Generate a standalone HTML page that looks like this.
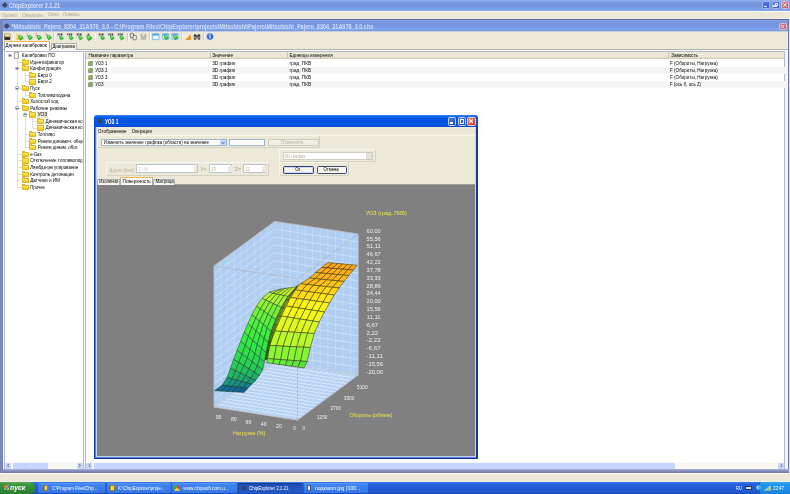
<!DOCTYPE html>
<html><head><meta charset="utf-8">
<style>
*{margin:0;padding:0;box-sizing:border-box}
html,body{width:790px;height:494px;overflow:hidden;background:#ece9d8;font-family:"Liberation Sans",sans-serif;}
.a{position:absolute}
.t{position:absolute;white-space:nowrap;line-height:1;color:#000}
#stage{position:absolute;left:0;top:0;width:790px;height:494px;overflow:hidden;filter:blur(0.4px)}
</style></head><body>
<div id="stage">
<!-- main window title -->
<div class="a" style="left:0;top:0;width:790px;height:10.6px;background:linear-gradient(#97b3ef 0%,#7b9ae3 22%,#7594e0 50%,#7b9fe8 80%,#84a8ee 94%,#7c98da 100%)"></div><div class="a" style="left:0;top:10.6px;width:790px;height:1px;background:#f8f8f4"></div>
<div class="a" style="left:0;top:19px;width:2.7px;height:453.6px;background:#7a86b8"></div>
<div class="a" style="left:789px;top:19px;width:1px;height:453.6px;background:#d4dcff"></div>
<div class="a" style="left:2.5px;top:3.4px;width:3.7px;height:3.7px;border-radius:0.8px;background:#3f4862;transform:rotate(45deg);box-shadow:0 0 0.6px #56607c"></div>
<!-- main buttons -->
<div class="a" style="left:762px;top:1.4px;width:8px;height:7.8px;border-radius:1.5px;background:linear-gradient(135deg,#5a80e4,#4168d6 60%,#3a5fcc);border:0.4px solid #9cb2ee"></div>
<div class="a" style="left:764px;top:6.2px;width:3px;height:1.1px;background:#f4f6ff"></div>
<div class="a" style="left:771.6px;top:1.4px;width:8px;height:7.8px;border-radius:1.5px;background:linear-gradient(135deg,#5a80e4,#4168d6 60%,#3a5fcc);border:0.4px solid #9cb2ee"></div>
<div class="a" style="left:774.8px;top:3px;width:3.2px;height:2.8px;border:0.45px solid #e8eeff;border-top-width:0.8px"></div>
<div class="a" style="left:773.4px;top:4.5px;width:3.2px;height:2.8px;border:0.45px solid #e8eeff;border-top-width:0.8px;background:#4168d6"></div>
<div class="a" style="left:781.2px;top:1.4px;width:8px;height:7.8px;border-radius:1.5px;background:linear-gradient(135deg,#d48a94,#c4707a 60%,#b8626e);border:0.4px solid #dcb8cc"></div>
<svg class="a" style="left:781.2px;top:1.4px" width="8" height="7.8"><path d="M2.3 2.2 L5.7 5.6 M5.7 2.2 L2.3 5.6" stroke="#fbf3f5" stroke-width="0.85"/></svg>
<!-- menu bar -->
<div class="a" style="left:0;top:11.5px;width:790px;height:7.5px;background:#ece9d8"></div>
<!-- MDI child -->
<div class="a" style="left:2.7px;top:19.3px;width:786.3px;height:453.2px;background:#c6ccdc"></div>
<div class="a" style="left:2.7px;top:18.9px;width:786.3px;height:1px;background:#667090"></div>
<div class="a" style="left:787.7px;top:19.3px;width:1.3px;height:453.2px;background:#7078a8"></div>
<div class="a" style="left:2.7px;top:19.9px;width:785px;height:11.6px;background:linear-gradient(#7f9de6 0%,#7695e1 30%,#7696e2 55%,#7fa6ee 86%,#7fa4ec 93%,#6c8ad2 100%)"></div>
<div class="a" style="left:4.7px;top:24px;width:3.6px;height:3.6px;border-radius:0.8px;background:#3f4862;transform:rotate(45deg);box-shadow:0 0 0.6px #56607c"></div>
<div class="a" style="left:779px;top:23px;width:7.5px;height:7.2px;border-radius:1.3px;background:linear-gradient(135deg,#d48a94,#c4707a 60%,#b8626e);border:0.4px solid #dcb8cc"></div>
<svg class="a" style="left:779px;top:23px" width="7.5" height="7"><path d="M2.1 2 L5.4 5.3 M5.4 2 L2.1 5.3" stroke="#fbf3f5" stroke-width="0.8"/></svg>
<!-- child client -->
<div class="a" style="left:2.7px;top:31.5px;width:785px;height:438px;background:#ece9d8"></div>
<!-- toolbar icons -->
<div id="tb">
<div class="a" style="left:12.7px;top:33px;width:0.5px;height:8px;background:#cfccbd;"></div><div class="a" style="left:13.2px;top:33px;width:0.5px;height:8px;background:#fbfaf5;"></div><div class="a" style="left:53.2px;top:33px;width:0.5px;height:8px;background:#cfccbd;"></div><div class="a" style="left:53.7px;top:33px;width:0.5px;height:8px;background:#fbfaf5;"></div><div class="a" style="left:94.7px;top:33px;width:0.5px;height:8px;background:#cfccbd;"></div><div class="a" style="left:95.2px;top:33px;width:0.5px;height:8px;background:#fbfaf5;"></div><div class="a" style="left:127.2px;top:33px;width:0.5px;height:8px;background:#cfccbd;"></div><div class="a" style="left:127.7px;top:33px;width:0.5px;height:8px;background:#fbfaf5;"></div><div class="a" style="left:149.2px;top:33px;width:0.5px;height:8px;background:#cfccbd;"></div><div class="a" style="left:149.7px;top:33px;width:0.5px;height:8px;background:#fbfaf5;"></div><div class="a" style="left:181.2px;top:33px;width:0.5px;height:8px;background:#cfccbd;"></div><div class="a" style="left:181.7px;top:33px;width:0.5px;height:8px;background:#fbfaf5;"></div><div class="a" style="left:203.2px;top:33px;width:0.5px;height:8px;background:#cfccbd;"></div><div class="a" style="left:203.7px;top:33px;width:0.5px;height:8px;background:#fbfaf5;"></div>
</div>
<!-- tabs -->
<div class="a" style="left:2.7px;top:49.2px;width:785px;height:420.3px;background:#f4f6fb;border-top:0.5px solid #b4b6b4"></div>
<div class="a" style="left:3.5px;top:41px;width:46.5px;height:9.5px;background:#fcfcfa;border:0.5px solid #a9b0ae;border-bottom:none;border-radius:1.5px 1.5px 0 0"></div>
<div class="a" style="left:3.8px;top:41px;width:46px;height:1.1px;background:#f5b552;border-radius:1.5px 1.5px 0 0"></div>
<div class="a" style="left:50.5px;top:42.5px;width:26.5px;height:7.2px;background:#f6f5ee;border:0.5px solid #a9b0ae;border-bottom:none;border-radius:1.5px 1.5px 0 0"></div>
<!-- tree pane -->
<div class="a" style="left:4.1px;top:50.9px;width:79.7px;height:418.4px;background:#fff;border:0.7px solid #b4bccc"></div>
<div id="tree">
<div class="a" style="left:9.45px;top:57.4px;width:0.5px;height:0px;background:#dedede;"></div><div class="a" style="left:16.75px;top:58.4px;width:0.5px;height:128.6px;background:#dedede;"></div><div class="a" style="left:17px;top:61.73px;width:4.6px;height:0.5px;background:#dedede;"></div><div class="a" style="left:17px;top:68.31px;width:4.6px;height:0.5px;background:#dedede;"></div><div class="a" style="left:25px;top:74.89px;width:4.2px;height:0.5px;background:#dedede;"></div><div class="a" style="left:25px;top:81.47px;width:4.2px;height:0.5px;background:#dedede;"></div><div class="a" style="left:17px;top:88.05px;width:4.6px;height:0.5px;background:#dedede;"></div><div class="a" style="left:25px;top:94.63px;width:4.2px;height:0.5px;background:#dedede;"></div><div class="a" style="left:17px;top:101.21px;width:4.6px;height:0.5px;background:#dedede;"></div><div class="a" style="left:17px;top:107.79px;width:4.6px;height:0.5px;background:#dedede;"></div><div class="a" style="left:25px;top:114.37px;width:4.2px;height:0.5px;background:#dedede;"></div><div class="a" style="left:32.6px;top:120.95px;width:4.4px;height:0.5px;background:#dedede;"></div><div class="a" style="left:32.6px;top:127.53px;width:4.4px;height:0.5px;background:#dedede;"></div><div class="a" style="left:25px;top:134.11px;width:4.2px;height:0.5px;background:#dedede;"></div><div class="a" style="left:25px;top:140.69px;width:4.2px;height:0.5px;background:#dedede;"></div><div class="a" style="left:25px;top:147.27px;width:4.2px;height:0.5px;background:#dedede;"></div><div class="a" style="left:17px;top:153.85px;width:4.6px;height:0.5px;background:#dedede;"></div><div class="a" style="left:17px;top:160.43px;width:4.6px;height:0.5px;background:#dedede;"></div><div class="a" style="left:17px;top:167.01px;width:4.6px;height:0.5px;background:#dedede;"></div><div class="a" style="left:17px;top:173.59px;width:4.6px;height:0.5px;background:#dedede;"></div><div class="a" style="left:17px;top:180.17px;width:4.6px;height:0.5px;background:#dedede;"></div><div class="a" style="left:17px;top:186.75px;width:4.6px;height:0.5px;background:#dedede;"></div><div class="a" style="left:24.75px;top:71.56px;width:0.5px;height:10.16px;background:#dedede;"></div><div class="a" style="left:24.75px;top:91.3px;width:0.5px;height:3.58px;background:#dedede;"></div><div class="a" style="left:24.75px;top:111.04px;width:0.5px;height:36.48px;background:#dedede;"></div><div class="a" style="left:32.35px;top:117.62px;width:0.5px;height:10.16px;background:#dedede;"></div><div class="a" style="left:7.8px;top:53.5px;width:3.8px;height:3.8px;background:#eef1f6;border:0.5px solid #a9b5c8;border-radius:1px"></div><div class="a" style="left:8.7px;top:55.1px;width:2px;height:0.6px;background:#6a6f7a;"></div><div class="a" style="left:13.6px;top:52px;width:5.2px;height:6.8px;background:#f1f1ee;border:0.5px solid #a5a5a0;border-radius:0.8px"></div><div class="a" style="left:21.5px;top:59.68px;width:7px;height:5.2px;background:linear-gradient(#fdee6e,#f6d322 70%,#eec51c);border:0.45px solid #dcb62a;border-radius:0.8px"></div><div class="a" style="left:21.5px;top:58.78px;width:3.3px;height:1.5px;background:#f7dc45;border:0.45px solid #dcb62a;border-bottom:none;border-radius:0.8px 0.8px 0 0"></div><div class="a" style="left:15.1px;top:66.66px;width:3.8px;height:3.8px;background:#eef1f6;border:0.5px solid #a9b5c8;border-radius:1px"></div><div class="a" style="left:16px;top:68.26px;width:2px;height:0.6px;background:#6a6f7a;"></div><div class="a" style="left:21.5px;top:66.26px;width:7px;height:5.2px;background:linear-gradient(#fdee6e,#f6d322 70%,#eec51c);border:0.45px solid #dcb62a;border-radius:0.8px"></div><div class="a" style="left:21.5px;top:65.36px;width:3.3px;height:1.5px;background:#f7dc45;border:0.45px solid #dcb62a;border-bottom:none;border-radius:0.8px 0.8px 0 0"></div><div class="a" style="left:29.1px;top:72.84px;width:7px;height:5.2px;background:linear-gradient(#fdee6e,#f6d322 70%,#eec51c);border:0.45px solid #dcb62a;border-radius:0.8px"></div><div class="a" style="left:29.1px;top:71.94px;width:3.3px;height:1.5px;background:#f7dc45;border:0.45px solid #dcb62a;border-bottom:none;border-radius:0.8px 0.8px 0 0"></div><div class="a" style="left:29.1px;top:79.42px;width:7px;height:5.2px;background:linear-gradient(#fdee6e,#f6d322 70%,#eec51c);border:0.45px solid #dcb62a;border-radius:0.8px"></div><div class="a" style="left:29.1px;top:78.52px;width:3.3px;height:1.5px;background:#f7dc45;border:0.45px solid #dcb62a;border-bottom:none;border-radius:0.8px 0.8px 0 0"></div><div class="a" style="left:15.1px;top:86.4px;width:3.8px;height:3.8px;background:#eef1f6;border:0.5px solid #a9b5c8;border-radius:1px"></div><div class="a" style="left:16px;top:88px;width:2px;height:0.6px;background:#6a6f7a;"></div><div class="a" style="left:21.5px;top:86px;width:7px;height:5.2px;background:linear-gradient(#fdee6e,#f6d322 70%,#eec51c);border:0.45px solid #dcb62a;border-radius:0.8px"></div><div class="a" style="left:21.5px;top:85.1px;width:3.3px;height:1.5px;background:#f7dc45;border:0.45px solid #dcb62a;border-bottom:none;border-radius:0.8px 0.8px 0 0"></div><div class="a" style="left:29.1px;top:92.58px;width:7px;height:5.2px;background:linear-gradient(#fdee6e,#f6d322 70%,#eec51c);border:0.45px solid #dcb62a;border-radius:0.8px"></div><div class="a" style="left:29.1px;top:91.68px;width:3.3px;height:1.5px;background:#f7dc45;border:0.45px solid #dcb62a;border-bottom:none;border-radius:0.8px 0.8px 0 0"></div><div class="a" style="left:21.5px;top:99.16px;width:7px;height:5.2px;background:linear-gradient(#fdee6e,#f6d322 70%,#eec51c);border:0.45px solid #dcb62a;border-radius:0.8px"></div><div class="a" style="left:21.5px;top:98.26px;width:3.3px;height:1.5px;background:#f7dc45;border:0.45px solid #dcb62a;border-bottom:none;border-radius:0.8px 0.8px 0 0"></div><div class="a" style="left:15.1px;top:106.14px;width:3.8px;height:3.8px;background:#eef1f6;border:0.5px solid #a9b5c8;border-radius:1px"></div><div class="a" style="left:16px;top:107.74px;width:2px;height:0.6px;background:#6a6f7a;"></div><div class="a" style="left:21.5px;top:105.74px;width:7px;height:5.2px;background:linear-gradient(#fdee6e,#f6d322 70%,#eec51c);border:0.45px solid #dcb62a;border-radius:0.8px"></div><div class="a" style="left:21.5px;top:104.84px;width:3.3px;height:1.5px;background:#f7dc45;border:0.45px solid #dcb62a;border-bottom:none;border-radius:0.8px 0.8px 0 0"></div><div class="a" style="left:23.1px;top:112.72px;width:3.8px;height:3.8px;background:#eef1f6;border:0.5px solid #a9b5c8;border-radius:1px"></div><div class="a" style="left:24px;top:114.32px;width:2px;height:0.6px;background:#6a6f7a;"></div><div class="a" style="left:36.8px;top:111.62px;width:11px;height:6px;background:#ece9d8;"></div><div class="a" style="left:29.1px;top:112.32px;width:7px;height:5.2px;background:linear-gradient(#fdee6e,#f6d322 70%,#eec51c);border:0.45px solid #dcb62a;border-radius:0.8px"></div><div class="a" style="left:29.1px;top:111.42px;width:3.3px;height:1.5px;background:#f7dc45;border:0.45px solid #dcb62a;border-bottom:none;border-radius:0.8px 0.8px 0 0"></div><div class="a" style="left:36.9px;top:118.9px;width:7px;height:5.2px;background:linear-gradient(#fdee6e,#f6d322 70%,#eec51c);border:0.45px solid #dcb62a;border-radius:0.8px"></div><div class="a" style="left:36.9px;top:118px;width:3.3px;height:1.5px;background:#f7dc45;border:0.45px solid #dcb62a;border-bottom:none;border-radius:0.8px 0.8px 0 0"></div><div class="a" style="left:36.9px;top:125.48px;width:7px;height:5.2px;background:linear-gradient(#fdee6e,#f6d322 70%,#eec51c);border:0.45px solid #dcb62a;border-radius:0.8px"></div><div class="a" style="left:36.9px;top:124.58px;width:3.3px;height:1.5px;background:#f7dc45;border:0.45px solid #dcb62a;border-bottom:none;border-radius:0.8px 0.8px 0 0"></div><div class="a" style="left:29.1px;top:132.06px;width:7px;height:5.2px;background:linear-gradient(#fdee6e,#f6d322 70%,#eec51c);border:0.45px solid #dcb62a;border-radius:0.8px"></div><div class="a" style="left:29.1px;top:131.16px;width:3.3px;height:1.5px;background:#f7dc45;border:0.45px solid #dcb62a;border-bottom:none;border-radius:0.8px 0.8px 0 0"></div><div class="a" style="left:29.1px;top:138.64px;width:7px;height:5.2px;background:linear-gradient(#fdee6e,#f6d322 70%,#eec51c);border:0.45px solid #dcb62a;border-radius:0.8px"></div><div class="a" style="left:29.1px;top:137.74px;width:3.3px;height:1.5px;background:#f7dc45;border:0.45px solid #dcb62a;border-bottom:none;border-radius:0.8px 0.8px 0 0"></div><div class="a" style="left:29.1px;top:145.22px;width:7px;height:5.2px;background:linear-gradient(#fdee6e,#f6d322 70%,#eec51c);border:0.45px solid #dcb62a;border-radius:0.8px"></div><div class="a" style="left:29.1px;top:144.32px;width:3.3px;height:1.5px;background:#f7dc45;border:0.45px solid #dcb62a;border-bottom:none;border-radius:0.8px 0.8px 0 0"></div><div class="a" style="left:21.5px;top:151.8px;width:7px;height:5.2px;background:linear-gradient(#fdee6e,#f6d322 70%,#eec51c);border:0.45px solid #dcb62a;border-radius:0.8px"></div><div class="a" style="left:21.5px;top:150.9px;width:3.3px;height:1.5px;background:#f7dc45;border:0.45px solid #dcb62a;border-bottom:none;border-radius:0.8px 0.8px 0 0"></div><div class="a" style="left:21.5px;top:158.38px;width:7px;height:5.2px;background:linear-gradient(#fdee6e,#f6d322 70%,#eec51c);border:0.45px solid #dcb62a;border-radius:0.8px"></div><div class="a" style="left:21.5px;top:157.48px;width:3.3px;height:1.5px;background:#f7dc45;border:0.45px solid #dcb62a;border-bottom:none;border-radius:0.8px 0.8px 0 0"></div><div class="a" style="left:21.5px;top:164.96px;width:7px;height:5.2px;background:linear-gradient(#fdee6e,#f6d322 70%,#eec51c);border:0.45px solid #dcb62a;border-radius:0.8px"></div><div class="a" style="left:21.5px;top:164.06px;width:3.3px;height:1.5px;background:#f7dc45;border:0.45px solid #dcb62a;border-bottom:none;border-radius:0.8px 0.8px 0 0"></div><div class="a" style="left:21.5px;top:171.54px;width:7px;height:5.2px;background:linear-gradient(#fdee6e,#f6d322 70%,#eec51c);border:0.45px solid #dcb62a;border-radius:0.8px"></div><div class="a" style="left:21.5px;top:170.64px;width:3.3px;height:1.5px;background:#f7dc45;border:0.45px solid #dcb62a;border-bottom:none;border-radius:0.8px 0.8px 0 0"></div><div class="a" style="left:21.5px;top:178.12px;width:7px;height:5.2px;background:linear-gradient(#fdee6e,#f6d322 70%,#eec51c);border:0.45px solid #dcb62a;border-radius:0.8px"></div><div class="a" style="left:21.5px;top:177.22px;width:3.3px;height:1.5px;background:#f7dc45;border:0.45px solid #dcb62a;border-bottom:none;border-radius:0.8px 0.8px 0 0"></div><div class="a" style="left:21.5px;top:184.7px;width:7px;height:5.2px;background:linear-gradient(#fdee6e,#f6d322 70%,#eec51c);border:0.45px solid #dcb62a;border-radius:0.8px"></div><div class="a" style="left:21.5px;top:183.8px;width:3.3px;height:1.5px;background:#f7dc45;border:0.45px solid #dcb62a;border-bottom:none;border-radius:0.8px 0.8px 0 0"></div>
</div>
<!-- tree hscroll -->
<div class="a" style="left:4.8px;top:462.2px;width:78.3px;height:6.6px;background:#f8f8f3"></div>
<div class="a" style="left:5.2px;top:462.5px;width:6px;height:6px;background:#c9d7fa;border-radius:1px"></div>
<div class="a" style="left:76.6px;top:462.5px;width:6px;height:6px;background:#c9d7fa;border-radius:1px"></div>
<div class="a" style="left:12.6px;top:462.5px;width:35.4px;height:6px;background:#c6d5fb;border-radius:1px"></div>
<!-- right pane -->
<div class="a" style="left:85px;top:50.9px;width:700.2px;height:418.4px;background:#fff;border:0.7px solid #b4bccc"></div>
<div class="a" style="left:85.7px;top:51.6px;width:698.8px;height:7.6px;background:#ebe8d7;border-bottom:0.7px solid #d0cdbe;box-shadow:inset 0 -1px 0.5px #e2dfcf"></div>
<div class="a" style="left:209.5px;top:52px;width:0.5px;height:6px;background:#c9c5b4"></div>
<div class="a" style="left:286.5px;top:52px;width:0.5px;height:6px;background:#c9c5b4"></div>
<div class="a" style="left:667.5px;top:52px;width:0.5px;height:6px;background:#c9c5b4"></div>
<div class="a" style="left:88.3px;top:61.2px;width:4.6px;height:4.4px;background:linear-gradient(135deg,#c8a050 0 30%,#6c9a50 30% 65%,#8a8a8a 65%);border-radius:1px;opacity:.85"></div><div class="a" style="left:86.6px;top:67px;width:698.3px;height:7px;background:#f6f6f6;"></div><div class="a" style="left:88.3px;top:68.2px;width:4.6px;height:4.4px;background:linear-gradient(135deg,#c8a050 0 30%,#6c9a50 30% 65%,#8a8a8a 65%);border-radius:1px;opacity:.85"></div><div class="a" style="left:88.3px;top:75.2px;width:4.6px;height:4.4px;background:linear-gradient(135deg,#c8a050 0 30%,#6c9a50 30% 65%,#8a8a8a 65%);border-radius:1px;opacity:.85"></div><div class="a" style="left:86.6px;top:81px;width:698.3px;height:7px;background:#f6f6f6;"></div><div class="a" style="left:88.3px;top:82.2px;width:4.6px;height:4.4px;background:linear-gradient(135deg,#c8a050 0 30%,#6c9a50 30% 65%,#8a8a8a 65%);border-radius:1px;opacity:.85"></div>
<!-- right hscroll -->
<div class="a" style="left:85.7px;top:462.2px;width:698.8px;height:6.6px;background:#f8f8f3"></div>
<div class="a" style="left:86.2px;top:462.5px;width:6px;height:6px;background:#c9d7fa;border-radius:1px"></div>
<div class="a" style="left:778px;top:462.5px;width:6px;height:6px;background:#c9d7fa;border-radius:1px"></div>
<div class="a" style="left:93.5px;top:462.5px;width:581.5px;height:6px;background:#c6d5fb;border-radius:1px"></div>
<svg class="a" style="left:0;top:460px" width="790" height="10"><g fill="none" stroke="#4d6185" stroke-width="0.9"><path d="M9 4 L7.4 5.5 L9 7"/><path d="M78.9 4 L80.5 5.5 L78.9 7"/><path d="M90.4 4 L88.8 5.5 L90.4 7"/><path d="M780.6 4 L782.2 5.5 L780.6 7"/></g><g stroke="#e4ecff" stroke-width="0.4"><path d="M29 4.3 V6.7 M30 4.3 V6.7 M31 4.3 V6.7"/></g></svg>
<!-- status -->
<div class="a" style="left:2.7px;top:469.4px;width:786.3px;height:3.2px;background:linear-gradient(#aab0d4,#8088b8 60%,#6c74a4)"></div><div class="a" style="left:0px;top:472.6px;width:790px;height:9.4px;background:#ece9d8;border-top:0.9px solid #fdfdfa"></div>
<!-- dialog -->
<div class="a" style="left:93.9px;top:114.8px;width:384.1px;height:344.4px;background:#173a9e;border-radius:3.5px 3.5px 0 0"></div><div class="a" style="left:95.4px;top:126px;width:381.1px;height:331.8px;background:#5b7cd0"></div><div class="a" style="left:96.1px;top:126px;width:379.7px;height:331.1px;background:#c6d2ee"></div>
<div class="a" style="left:93.8px;top:114.8px;width:384px;height:12.5px;border-radius:3.5px 3.5px 0 0;background:linear-gradient(#3a86f4 0%,#0a5be6 18%,#0353e0 50%,#0456e4 80%,#0a47c8 100%)"></div>
<div class="a" style="left:97.9px;top:119.2px;width:3.6px;height:3.6px;border-radius:0.8px;background:#39415c;transform:rotate(45deg);box-shadow:0 0 0.6px #4a5a90"></div>
<div class="a" style="left:448.2px;top:117.4px;width:8.2px;height:8.2px;border-radius:1.4px;background:linear-gradient(135deg,#4a7ee8,#2a5cd6 60%,#2150c4);border:0.6px solid #c4d4f6"></div>
<div class="a" style="left:450px;top:122.4px;width:3px;height:1.2px;background:#fff"></div>
<div class="a" style="left:457.8px;top:117.4px;width:8.2px;height:8.2px;border-radius:1.4px;background:linear-gradient(135deg,#4a7ee8,#2a5cd6 60%,#2150c4);border:0.6px solid #c4d4f6"></div>
<div class="a" style="left:459.8px;top:119.4px;width:4.4px;height:4.2px;border:0.6px solid #fff;border-top-width:1.3px"></div>
<div class="a" style="left:467.4px;top:117.4px;width:8.2px;height:8.2px;border-radius:1.4px;background:linear-gradient(135deg,#e88a6c,#d8583a 55%,#c4421f);border:0.6px solid #f0d0c8"></div>
<svg class="a" style="left:467.4px;top:117.4px" width="8.2" height="8.2"><path d="M2.3 2.3 L5.9 5.9 M5.9 2.3 L2.3 5.9" stroke="#fff" stroke-width="1.05"/></svg>
<div class="a" style="left:97px;top:127.3px;width:378px;height:329.2px;background:#ece9d8"></div>
<div class="a" style="left:96.8px;top:134.5px;width:378.2px;height:0.5px;background:#f7f5ec"></div><div class="a" style="left:97.4px;top:135.2px;width:222.8px;height:12.8px;border:0.6px solid #d6d2c2;border-top-color:#f8f7f0;border-left-color:#f8f7f0"></div>
<!-- combo -->
<div class="a" style="left:100.8px;top:138.8px;width:126.5px;height:7.2px;background:#fff;border:0.6px solid #9fb5cd"></div>
<div class="a" style="left:220.2px;top:139.6px;width:6.2px;height:5.8px;background:#c2d3fc;border-radius:1px"></div>
<svg class="a" style="left:220.2px;top:139.6px" width="6.2" height="5.8"><path d="M1.7 2.1 L3.1 3.7 L4.5 2.1" stroke="#4d6185" stroke-width="0.9" fill="none"/></svg>
<div class="a" style="left:228.5px;top:138.8px;width:36.5px;height:7.2px;background:#fff;border:0.6px solid #9fb5cd"></div>
<div class="a" style="left:267.5px;top:138.8px;width:51px;height:7.6px;background:#f1efe4;border:0.6px solid #cfccbd;border-radius:1px"></div>


<!-- 3d combo -->
<div class="a" style="left:278.7px;top:148.8px;width:97.6px;height:13px;border:0.6px solid #d6d2c2;border-top-color:#f8f7f0;border-left-color:#f8f7f0"></div>
<div class="a" style="left:282.5px;top:152px;width:90px;height:7.6px;background:#fff;border:0.6px solid #d0cdbf"></div>
<div class="a" style="left:365.6px;top:152.8px;width:6.2px;height:6px;background:#f0efe8;border:0.4px solid #d8d5c8;border-radius:1px"></div>
<svg class="a" style="left:365.6px;top:152.8px" width="6.2" height="6"><path d="M1.7 2.2 L3.1 3.8 L4.5 2.2" stroke="#bdbaaa" stroke-width="0.8" fill="none"/></svg>
<!-- ok cancel -->
<div class="a" style="left:278.7px;top:162.2px;width:70.4px;height:13.6px;border:0.6px solid #d6d2c2;border-top-color:#f8f7f0;border-left-color:#f8f7f0"></div>
<div class="a" style="left:282.5px;top:165.5px;width:31px;height:8px;background:#f6f5ee;border:0.7px solid #2f427a;border-radius:1.6px;box-shadow:inset 0 0 0 0.8px #bccef4"></div>
<div class="a" style="left:316.5px;top:165.5px;width:30.5px;height:8px;background:#f6f5ee;border:0.7px solid #3c4c74;border-radius:1.6px"></div>
<!-- address row -->
<div class="a" style="left:105.6px;top:162.2px;width:163.6px;height:13.8px;border:0.6px solid #d6d2c2;border-top-color:#f8f7f0;border-left-color:#f8f7f0"></div>
<div class="a" style="left:136.4px;top:164.4px;width:61.6px;height:8.6px;background:#fff;border:0.7px solid #b9c5d3;border-radius:0.8px"></div>
<div class="a" style="left:209px;top:164.4px;width:23.3px;height:8.6px;background:#fff;border:0.7px solid #b9c5d3;border-radius:0.8px"></div>
<div class="a" style="left:243.2px;top:164.4px;width:23.3px;height:8.6px;background:#fff;border:0.7px solid #b9c5d3;border-radius:0.8px"></div>
<div class="a" style="left:193.6px;top:165.6px;width:3.8px;height:6.4px;background:#efeee8;border-radius:0.6px"></div><svg class="a" style="left:193.6px;top:165.6px" width="3.8" height="6.4"><path d="M1 2.4 L1.9 1.4 L2.8 2.4 M1 4 L1.9 5 L2.8 4" stroke="#c2bfb0" stroke-width="0.5" fill="none"/></svg>
<div class="a" style="left:228px;top:165.6px;width:3.8px;height:6.4px;background:#efeee8;border-radius:0.6px"></div><svg class="a" style="left:228px;top:165.6px" width="3.8" height="6.4"><path d="M1 2.4 L1.9 1.4 L2.8 2.4 M1 4 L1.9 5 L2.8 4" stroke="#c2bfb0" stroke-width="0.5" fill="none"/></svg>
<div class="a" style="left:262.2px;top:165.6px;width:3.8px;height:6.4px;background:#efeee8;border-radius:0.6px"></div><svg class="a" style="left:262.2px;top:165.6px" width="3.8" height="6.4"><path d="M1 2.4 L1.9 1.4 L2.8 2.4 M1 4 L1.9 5 L2.8 4" stroke="#c2bfb0" stroke-width="0.5" fill="none"/></svg>
<!-- dialog tabs -->
<div class="a" style="left:96.8px;top:184.4px;width:378.2px;height:0.7px;background:#9d9d90"></div>
<div class="a" style="left:97.3px;top:178.5px;width:22.5px;height:6px;background:#f6f5ee;border:0.5px solid #a9b0ae;border-bottom:none;border-radius:1.3px 1.3px 0 0"></div>
<div class="a" style="left:120.2px;top:176.8px;width:32.8px;height:8.3px;background:#fcfcfa;border:0.5px solid #a9b0ae;border-bottom:none;border-radius:1.3px 1.3px 0 0"></div>
<div class="a" style="left:120.4px;top:176.8px;width:32.4px;height:1.1px;background:#f5b552;border-radius:1.3px 1.3px 0 0"></div>
<div class="a" style="left:153.4px;top:178.5px;width:22px;height:6px;background:#f6f5ee;border:0.5px solid #a9b0ae;border-bottom:none;border-radius:1.3px 1.3px 0 0"></div>
<!-- chart -->
<div class="a" style="left:97px;top:185.4px;width:378px;height:270.5px;background:#808080"></div>

<svg class="a" style="left:0;top:0" width="790" height="494" viewBox="0 0 790 494">
<polygon points="214.0,266.0 274.7,221.4 274.7,362.4 214.0,407.0" fill="#afcef1"/><polygon points="274.7,221.4 358.2,234.0 358.2,375.0 274.7,362.4" fill="#afcef1"/><polygon points="214.0,407.0 274.7,362.4 358.2,375.0 297.5,420.0" fill="#b4d0f3"/><line x1="214.0" y1="266.0" x2="214.0" y2="407.0" stroke="#cfe1f6" stroke-width="0.5"/><line x1="220.7" y1="261.0" x2="220.7" y2="402.0" stroke="#cfe1f6" stroke-width="0.5"/><line x1="227.5" y1="256.1" x2="227.5" y2="397.1" stroke="#cfe1f6" stroke-width="0.5"/><line x1="234.2" y1="251.1" x2="234.2" y2="392.1" stroke="#cfe1f6" stroke-width="0.5"/><line x1="241.0" y1="246.2" x2="241.0" y2="387.2" stroke="#cfe1f6" stroke-width="0.5"/><line x1="247.7" y1="241.2" x2="247.7" y2="382.2" stroke="#cfe1f6" stroke-width="0.5"/><line x1="254.5" y1="236.3" x2="254.5" y2="377.3" stroke="#cfe1f6" stroke-width="0.5"/><line x1="261.2" y1="231.3" x2="261.2" y2="372.3" stroke="#cfe1f6" stroke-width="0.5"/><line x1="268.0" y1="226.4" x2="268.0" y2="367.4" stroke="#cfe1f6" stroke-width="0.5"/><line x1="274.7" y1="221.4" x2="274.7" y2="362.4" stroke="#cfe1f6" stroke-width="0.5"/><line x1="214.0" y1="266.0" x2="274.7" y2="221.4" stroke="#eaf3fc" stroke-width="0.5"/><line x1="214.0" y1="273.8" x2="274.7" y2="229.2" stroke="#eaf3fc" stroke-width="0.5"/><line x1="214.0" y1="281.7" x2="274.7" y2="237.1" stroke="#eaf3fc" stroke-width="0.5"/><line x1="214.0" y1="289.5" x2="274.7" y2="244.9" stroke="#eaf3fc" stroke-width="0.5"/><line x1="214.0" y1="297.3" x2="274.7" y2="252.7" stroke="#eaf3fc" stroke-width="0.5"/><line x1="214.0" y1="305.2" x2="274.7" y2="260.6" stroke="#eaf3fc" stroke-width="0.5"/><line x1="214.0" y1="313.0" x2="274.7" y2="268.4" stroke="#eaf3fc" stroke-width="0.5"/><line x1="214.0" y1="320.8" x2="274.7" y2="276.2" stroke="#eaf3fc" stroke-width="0.5"/><line x1="214.0" y1="328.7" x2="274.7" y2="284.1" stroke="#eaf3fc" stroke-width="0.5"/><line x1="214.0" y1="336.5" x2="274.7" y2="291.9" stroke="#eaf3fc" stroke-width="0.5"/><line x1="214.0" y1="344.3" x2="274.7" y2="299.7" stroke="#eaf3fc" stroke-width="0.5"/><line x1="214.0" y1="352.2" x2="274.7" y2="307.6" stroke="#eaf3fc" stroke-width="0.5"/><line x1="214.0" y1="360.0" x2="274.7" y2="315.4" stroke="#eaf3fc" stroke-width="0.5"/><line x1="214.0" y1="367.8" x2="274.7" y2="323.2" stroke="#eaf3fc" stroke-width="0.5"/><line x1="214.0" y1="375.7" x2="274.7" y2="331.1" stroke="#eaf3fc" stroke-width="0.5"/><line x1="214.0" y1="383.5" x2="274.7" y2="338.9" stroke="#eaf3fc" stroke-width="0.5"/><line x1="214.0" y1="391.3" x2="274.7" y2="346.7" stroke="#eaf3fc" stroke-width="0.5"/><line x1="214.0" y1="399.2" x2="274.7" y2="354.6" stroke="#eaf3fc" stroke-width="0.5"/><line x1="214.0" y1="407.0" x2="274.7" y2="362.4" stroke="#eaf3fc" stroke-width="0.5"/><line x1="274.7" y1="221.4" x2="274.7" y2="362.4" stroke="#d6e6f8" stroke-width="0.5"/><line x1="282.3" y1="222.5" x2="282.3" y2="363.5" stroke="#d6e6f8" stroke-width="0.5"/><line x1="289.9" y1="223.7" x2="289.9" y2="364.7" stroke="#d6e6f8" stroke-width="0.5"/><line x1="297.5" y1="224.8" x2="297.5" y2="365.8" stroke="#d6e6f8" stroke-width="0.5"/><line x1="305.1" y1="226.0" x2="305.1" y2="367.0" stroke="#d6e6f8" stroke-width="0.5"/><line x1="312.7" y1="227.1" x2="312.7" y2="368.1" stroke="#d6e6f8" stroke-width="0.5"/><line x1="320.2" y1="228.3" x2="320.2" y2="369.3" stroke="#d6e6f8" stroke-width="0.5"/><line x1="327.8" y1="229.4" x2="327.8" y2="370.4" stroke="#d6e6f8" stroke-width="0.5"/><line x1="335.4" y1="230.6" x2="335.4" y2="371.6" stroke="#d6e6f8" stroke-width="0.5"/><line x1="343.0" y1="231.7" x2="343.0" y2="372.7" stroke="#d6e6f8" stroke-width="0.5"/><line x1="350.6" y1="232.9" x2="350.6" y2="373.9" stroke="#d6e6f8" stroke-width="0.5"/><line x1="358.2" y1="234.0" x2="358.2" y2="375.0" stroke="#d6e6f8" stroke-width="0.5"/><line x1="274.7" y1="221.4" x2="358.2" y2="234.0" stroke="#eaf3fc" stroke-width="0.5"/><line x1="274.7" y1="229.2" x2="358.2" y2="241.8" stroke="#eaf3fc" stroke-width="0.5"/><line x1="274.7" y1="237.1" x2="358.2" y2="249.7" stroke="#eaf3fc" stroke-width="0.5"/><line x1="274.7" y1="244.9" x2="358.2" y2="257.5" stroke="#eaf3fc" stroke-width="0.5"/><line x1="274.7" y1="252.7" x2="358.2" y2="265.3" stroke="#eaf3fc" stroke-width="0.5"/><line x1="274.7" y1="260.6" x2="358.2" y2="273.2" stroke="#eaf3fc" stroke-width="0.5"/><line x1="274.7" y1="268.4" x2="358.2" y2="281.0" stroke="#eaf3fc" stroke-width="0.5"/><line x1="274.7" y1="276.2" x2="358.2" y2="288.8" stroke="#eaf3fc" stroke-width="0.5"/><line x1="274.7" y1="284.1" x2="358.2" y2="296.7" stroke="#eaf3fc" stroke-width="0.5"/><line x1="274.7" y1="291.9" x2="358.2" y2="304.5" stroke="#eaf3fc" stroke-width="0.5"/><line x1="274.7" y1="299.7" x2="358.2" y2="312.3" stroke="#eaf3fc" stroke-width="0.5"/><line x1="274.7" y1="307.6" x2="358.2" y2="320.2" stroke="#eaf3fc" stroke-width="0.5"/><line x1="274.7" y1="315.4" x2="358.2" y2="328.0" stroke="#eaf3fc" stroke-width="0.5"/><line x1="274.7" y1="323.2" x2="358.2" y2="335.8" stroke="#eaf3fc" stroke-width="0.5"/><line x1="274.7" y1="331.1" x2="358.2" y2="343.7" stroke="#eaf3fc" stroke-width="0.5"/><line x1="274.7" y1="338.9" x2="358.2" y2="351.5" stroke="#eaf3fc" stroke-width="0.5"/><line x1="274.7" y1="346.7" x2="358.2" y2="359.3" stroke="#eaf3fc" stroke-width="0.5"/><line x1="274.7" y1="354.6" x2="358.2" y2="367.2" stroke="#eaf3fc" stroke-width="0.5"/><line x1="274.7" y1="362.4" x2="358.2" y2="375.0" stroke="#eaf3fc" stroke-width="0.5"/><line x1="214.0" y1="407.0" x2="274.7" y2="362.4" stroke="#d4e4f8" stroke-width="0.6"/><line x1="218.9" y1="407.8" x2="279.6" y2="363.1" stroke="#d4e4f8" stroke-width="0.6"/><line x1="223.8" y1="408.5" x2="284.5" y2="363.9" stroke="#d4e4f8" stroke-width="0.6"/><line x1="228.7" y1="409.3" x2="289.4" y2="364.6" stroke="#d4e4f8" stroke-width="0.6"/><line x1="233.6" y1="410.1" x2="294.3" y2="365.4" stroke="#d4e4f8" stroke-width="0.6"/><line x1="238.6" y1="410.8" x2="299.3" y2="366.1" stroke="#d4e4f8" stroke-width="0.6"/><line x1="243.5" y1="411.6" x2="304.2" y2="366.8" stroke="#d4e4f8" stroke-width="0.6"/><line x1="248.4" y1="412.4" x2="309.1" y2="367.6" stroke="#d4e4f8" stroke-width="0.6"/><line x1="253.3" y1="413.1" x2="314.0" y2="368.3" stroke="#d4e4f8" stroke-width="0.6"/><line x1="258.2" y1="413.9" x2="318.9" y2="369.1" stroke="#d4e4f8" stroke-width="0.6"/><line x1="263.1" y1="414.6" x2="323.8" y2="369.8" stroke="#d4e4f8" stroke-width="0.6"/><line x1="268.0" y1="415.4" x2="328.7" y2="370.6" stroke="#d4e4f8" stroke-width="0.6"/><line x1="272.9" y1="416.2" x2="333.6" y2="371.3" stroke="#d4e4f8" stroke-width="0.6"/><line x1="277.9" y1="416.9" x2="338.6" y2="372.0" stroke="#d4e4f8" stroke-width="0.6"/><line x1="282.8" y1="417.7" x2="343.5" y2="372.8" stroke="#d4e4f8" stroke-width="0.6"/><line x1="287.7" y1="418.5" x2="348.4" y2="373.5" stroke="#d4e4f8" stroke-width="0.6"/><line x1="292.6" y1="419.2" x2="353.3" y2="374.3" stroke="#d4e4f8" stroke-width="0.6"/><line x1="297.5" y1="420.0" x2="358.2" y2="375.0" stroke="#d4e4f8" stroke-width="0.6"/><line x1="214.0" y1="407.0" x2="297.5" y2="420.0" stroke="#f2f8fe" stroke-width="0.6"/><line x1="217.8" y1="404.2" x2="301.3" y2="417.2" stroke="#f2f8fe" stroke-width="0.6"/><line x1="221.6" y1="401.4" x2="305.1" y2="414.4" stroke="#f2f8fe" stroke-width="0.6"/><line x1="225.4" y1="398.6" x2="308.9" y2="411.6" stroke="#f2f8fe" stroke-width="0.6"/><line x1="229.2" y1="395.9" x2="312.7" y2="408.8" stroke="#f2f8fe" stroke-width="0.6"/><line x1="233.0" y1="393.1" x2="316.5" y2="405.9" stroke="#f2f8fe" stroke-width="0.6"/><line x1="236.8" y1="390.3" x2="320.3" y2="403.1" stroke="#f2f8fe" stroke-width="0.6"/><line x1="240.6" y1="387.5" x2="324.1" y2="400.3" stroke="#f2f8fe" stroke-width="0.6"/><line x1="244.3" y1="384.7" x2="327.9" y2="397.5" stroke="#f2f8fe" stroke-width="0.6"/><line x1="248.1" y1="381.9" x2="331.6" y2="394.7" stroke="#f2f8fe" stroke-width="0.6"/><line x1="251.9" y1="379.1" x2="335.4" y2="391.9" stroke="#f2f8fe" stroke-width="0.6"/><line x1="255.7" y1="376.3" x2="339.2" y2="389.1" stroke="#f2f8fe" stroke-width="0.6"/><line x1="259.5" y1="373.5" x2="343.0" y2="386.2" stroke="#f2f8fe" stroke-width="0.6"/><line x1="263.3" y1="370.8" x2="346.8" y2="383.4" stroke="#f2f8fe" stroke-width="0.6"/><line x1="267.1" y1="368.0" x2="350.6" y2="380.6" stroke="#f2f8fe" stroke-width="0.6"/><line x1="270.9" y1="365.2" x2="354.4" y2="377.8" stroke="#f2f8fe" stroke-width="0.6"/><line x1="274.7" y1="362.4" x2="358.2" y2="375.0" stroke="#f2f8fe" stroke-width="0.6"/><line x1="274.7" y1="362.4" x2="358.2" y2="375.0" stroke="#9aa4b0" stroke-width="0.5"/><line x1="214.0" y1="407.0" x2="274.7" y2="362.4" stroke="#9aa4b0" stroke-width="0.4"/><line x1="274.7" y1="221.4" x2="274.7" y2="362.4" stroke="#a8b4c4" stroke-width="0.4"/><g stroke="#2a2606" stroke-width="0.5" stroke-linejoin="round"><polygon points="327.9,262.6 332.8,263.0 326.9,267.9 321.6,267.5" fill="rgb(255,167,30)"/><polygon points="332.8,263.0 337.7,263.5 332.2,268.3 326.9,267.9" fill="rgb(255,167,29)"/><polygon points="337.7,263.5 342.6,263.9 337.4,268.8 332.2,268.3" fill="rgb(255,168,29)"/><polygon points="342.6,263.9 347.5,264.3 342.7,269.2 337.4,268.8" fill="rgb(255,168,29)"/><polygon points="347.5,264.3 352.4,264.8 347.9,269.6 342.7,269.2" fill="rgb(255,169,29)"/><polygon points="352.4,264.8 357.3,265.2 353.2,270.0 347.9,269.6" fill="rgb(255,169,29)"/><polygon points="321.6,267.5 326.9,267.9 321.0,273.0 315.5,272.5" fill="rgb(255,173,28)"/><polygon points="326.9,267.9 332.2,268.3 326.5,273.5 321.0,273.0" fill="rgb(255,173,28)"/><polygon points="332.2,268.3 337.4,268.8 332.1,274.0 326.5,273.5" fill="rgb(255,174,28)"/><polygon points="337.4,268.8 342.7,269.2 337.6,274.5 332.1,274.0" fill="rgb(255,175,28)"/><polygon points="342.7,269.2 347.9,269.6 343.1,275.0 337.6,274.5" fill="rgb(255,175,27)"/><polygon points="347.9,269.6 353.2,270.0 348.7,275.5 343.1,275.0" fill="rgb(255,176,27)"/><polygon points="315.5,272.5 321.0,273.0 315.2,278.6 309.5,278.0" fill="rgb(255,179,26)"/><polygon points="321.0,273.0 326.5,273.5 321.0,279.2 315.2,278.6" fill="rgb(255,180,26)"/><polygon points="326.5,273.5 332.1,274.0 326.7,279.8 321.0,279.2" fill="rgb(255,181,26)"/><polygon points="332.1,274.0 337.6,274.5 332.4,280.3 326.7,279.8" fill="rgb(255,181,26)"/><polygon points="337.6,274.5 343.1,275.0 338.2,280.9 332.4,280.3" fill="rgb(255,182,26)"/><polygon points="343.1,275.0 348.7,275.5 343.9,281.5 338.2,280.9" fill="rgb(255,183,26)"/><polygon points="309.5,278.0 315.2,278.6 307.0,284.5 300.6,283.8" fill="rgb(255,188,25)"/><polygon points="315.2,278.6 321.0,279.2 313.4,285.2 307.0,284.5" fill="rgb(255,190,25)"/><polygon points="321.0,279.2 326.7,279.8 319.8,285.9 313.4,285.2" fill="rgb(255,191,25)"/><polygon points="326.7,279.8 332.4,280.3 326.2,286.6 319.8,285.9" fill="rgb(255,193,25)"/><polygon points="332.4,280.3 338.2,280.9 332.7,287.3 326.2,286.6" fill="rgb(255,194,25)"/><polygon points="338.2,280.9 343.9,281.5 339.1,288.0 332.7,287.3" fill="rgb(255,196,25)"/><polygon points="300.6,283.8 307.0,284.5 301.6,290.8 295.1,290.0" fill="rgb(255,203,25)"/><polygon points="307.0,284.5 313.4,285.2 308.1,291.7 301.6,290.8" fill="rgb(255,205,25)"/><polygon points="313.4,285.2 319.8,285.9 314.6,292.5 308.1,291.7" fill="rgb(255,207,25)"/><polygon points="319.8,285.9 326.2,286.6 321.1,293.3 314.6,292.5" fill="rgb(255,209,25)"/><polygon points="326.2,286.6 332.7,287.3 327.6,294.2 321.1,293.3" fill="rgb(255,211,25)"/><polygon points="332.7,287.3 339.1,288.0 334.2,295.0 327.6,294.2" fill="rgb(255,213,25)"/><polygon points="295.1,290.0 301.6,290.8 297.0,298.4 290.5,297.5" fill="rgb(255,220,24)"/><polygon points="301.6,290.8 308.1,291.7 303.5,299.3 297.0,298.4" fill="rgb(255,222,24)"/><polygon points="308.1,291.7 314.6,292.5 310.1,300.2 303.5,299.3" fill="rgb(255,224,23)"/><polygon points="314.6,292.5 321.1,293.3 316.6,301.2 310.1,300.2" fill="rgb(255,226,23)"/><polygon points="321.1,293.3 327.6,294.2 323.1,302.1 316.6,301.2" fill="rgb(255,228,23)"/><polygon points="327.6,294.2 334.2,295.0 329.6,303.0 323.1,302.1" fill="rgb(255,230,22)"/><polygon points="290.5,297.5 297.0,298.4 292.5,307.0 286.1,306.0" fill="rgb(255,239,21)"/><polygon points="297.0,298.4 303.5,299.3 298.9,308.0 292.5,307.0" fill="rgb(255,241,21)"/><polygon points="303.5,299.3 310.1,300.2 305.3,309.0 298.9,308.0" fill="rgb(255,243,20)"/><polygon points="310.1,300.2 316.6,301.2 311.6,310.0 305.3,309.0" fill="rgb(255,245,20)"/><polygon points="316.6,301.2 323.1,302.1 318.0,311.0 311.6,310.0" fill="rgb(254,245,21)"/><polygon points="323.1,302.1 329.6,303.0 324.4,312.0 318.0,311.0" fill="rgb(252,246,21)"/><polygon points="286.1,306.0 292.5,307.0 287.5,317.0 281.2,316.0" fill="rgb(246,247,24)"/><polygon points="292.5,307.0 298.9,308.0 293.9,318.0 287.5,317.0" fill="rgb(245,248,25)"/><polygon points="298.9,308.0 305.3,309.0 300.2,319.0 293.9,318.0" fill="rgb(244,248,26)"/><polygon points="305.3,309.0 311.6,310.0 306.6,320.0 300.2,319.0" fill="rgb(242,248,26)"/><polygon points="311.6,310.0 318.0,311.0 312.9,321.0 306.6,320.0" fill="rgb(241,248,27)"/><polygon points="318.0,311.0 324.4,312.0 319.2,322.0 312.9,321.0" fill="rgb(240,249,28)"/><polygon points="281.2,316.0 287.5,317.0 281.4,331.4 274.8,331.0" fill="rgb(226,250,33)"/><polygon points="287.5,317.0 293.9,318.0 287.9,331.8 281.4,331.4" fill="rgb(224,250,33)"/><polygon points="293.9,318.0 300.2,319.0 294.5,332.2 287.9,331.8" fill="rgb(223,250,34)"/><polygon points="300.2,319.0 306.6,320.0 301.1,332.7 294.5,332.2" fill="rgb(221,250,34)"/><polygon points="306.6,320.0 312.9,321.0 307.6,333.1 301.1,332.7" fill="rgb(219,250,34)"/><polygon points="312.9,321.0 319.2,322.0 314.2,333.5 307.6,333.1" fill="rgb(218,250,35)"/><polygon points="274.8,331.0 281.4,331.4 276.4,345.8 269.6,345.5" fill="rgb(189,250,42)"/><polygon points="281.4,331.4 287.9,331.8 283.2,346.2 276.4,345.8" fill="rgb(187,249,43)"/><polygon points="287.9,331.8 294.5,332.2 290.0,346.5 283.2,346.2" fill="rgb(186,249,43)"/><polygon points="294.5,332.2 301.1,332.7 296.8,346.8 290.0,346.5" fill="rgb(185,249,43)"/><polygon points="301.1,332.7 307.6,333.1 303.6,347.2 296.8,346.8" fill="rgb(184,249,43)"/><polygon points="307.6,333.1 314.2,333.5 310.4,347.5 303.6,347.2" fill="rgb(182,249,44)"/><polygon points="269.6,345.5 276.4,345.8 274.0,359.1 267.4,358.6" fill="rgb(142,246,52)"/><polygon points="276.4,345.8 283.2,346.2 280.7,359.6 274.0,359.1" fill="rgb(140,246,52)"/><polygon points="283.2,346.2 290.0,346.5 287.3,360.1 280.7,359.6" fill="rgb(138,246,53)"/><polygon points="290.0,346.5 296.8,346.8 294.0,360.5 287.3,360.1" fill="rgb(137,246,53)"/><polygon points="296.8,346.8 303.6,347.2 300.6,361.0 294.0,360.5" fill="rgb(135,245,53)"/><polygon points="303.6,347.2 310.4,347.5 307.2,361.5 300.6,361.0" fill="rgb(134,245,54)"/><polygon points="267.4,358.6 274.0,359.1 272.9,363.5 266.7,362.6" fill="rgb(109,241,59)"/><polygon points="274.0,359.1 280.7,359.6 279.1,364.4 272.9,363.5" fill="rgb(106,240,60)"/><polygon points="280.7,359.6 287.3,360.1 285.4,365.3 279.1,364.4" fill="rgb(102,238,60)"/><polygon points="287.3,360.1 294.0,360.5 291.6,366.2 285.4,365.3" fill="rgb(97,235,61)"/><polygon points="294.0,360.5 300.6,361.0 297.8,367.1 291.6,366.2" fill="rgb(91,231,62)"/><polygon points="300.6,361.0 307.2,361.5 304.0,368.0 297.8,367.1" fill="rgb(85,228,63)"/></g><g stroke="#1c2406" stroke-width="0.45" stroke-linejoin="round"><polygon points="296.3,286.7 296.9,286.1 291.2,293.2 290.3,293.5" fill="rgb(224,240,30)"/><polygon points="296.9,286.1 297.4,285.6 292.0,292.8 291.2,293.2" fill="rgb(225,240,30)"/><polygon points="297.4,285.6 297.9,285.1 292.9,292.5 292.0,292.8" fill="rgb(225,240,30)"/><polygon points="297.9,285.1 298.5,284.5 293.8,292.2 292.9,292.5" fill="rgb(226,240,30)"/><polygon points="290.3,293.5 291.2,293.2 285.7,300.3 284.6,300.4" fill="rgb(216,240,30)"/><polygon points="291.2,293.2 292.0,292.8 286.8,300.2 285.7,300.3" fill="rgb(216,240,30)"/><polygon points="292.0,292.8 292.9,292.5 288.0,300.1 286.8,300.2" fill="rgb(216,240,30)"/><polygon points="292.9,292.5 293.8,292.2 289.1,300.0 288.0,300.1" fill="rgb(217,240,30)"/><polygon points="284.6,300.4 285.7,300.3 281.7,308.4 280.5,308.5" fill="rgb(207,240,30)"/><polygon points="285.7,300.3 286.8,300.2 282.8,308.2 281.7,308.4" fill="rgb(207,240,30)"/><polygon points="286.8,300.2 288.0,300.1 283.9,308.1 282.8,308.2" fill="rgb(207,240,30)"/><polygon points="288.0,300.1 289.1,300.0 285.1,308.0 283.9,308.1" fill="rgb(207,240,30)"/><polygon points="280.5,308.5 281.7,308.4 277.7,316.5 276.6,316.6" fill="rgb(195,240,31)"/><polygon points="281.7,308.4 282.8,308.2 278.8,316.4 277.7,316.5" fill="rgb(195,240,31)"/><polygon points="282.8,308.2 283.9,308.1 280.0,316.3 278.8,316.4" fill="rgb(195,240,31)"/><polygon points="283.9,308.1 285.1,308.0 281.1,316.2 280.0,316.3" fill="rgb(196,240,31)"/><polygon points="276.6,316.6 277.7,316.5 274.4,324.9 273.4,325.0" fill="rgb(179,238,34)"/><polygon points="277.7,316.5 278.8,316.4 275.4,324.7 274.4,324.9" fill="rgb(179,238,34)"/><polygon points="278.8,316.4 280.0,316.3 276.5,324.6 275.4,324.7" fill="rgb(179,238,34)"/><polygon points="280.0,316.3 281.1,316.2 277.5,324.5 276.5,324.6" fill="rgb(179,238,34)"/><polygon points="273.4,325.0 274.4,324.9 271.3,333.3 270.3,333.5" fill="rgb(162,236,38)"/><polygon points="274.4,324.9 275.4,324.7 272.2,333.2 271.3,333.3" fill="rgb(162,236,38)"/><polygon points="275.4,324.7 276.5,324.6 273.2,333.0 272.2,333.2" fill="rgb(162,236,38)"/><polygon points="276.5,324.6 277.5,324.5 274.1,332.9 273.2,333.0" fill="rgb(163,236,37)"/><polygon points="270.3,333.5 271.3,333.3 268.9,342.0 268.2,342.3" fill="rgb(143,234,41)"/><polygon points="271.3,333.3 272.2,333.2 269.6,341.8 268.9,342.0" fill="rgb(144,234,41)"/><polygon points="272.2,333.2 273.2,333.0 270.3,341.6 269.6,341.8" fill="rgb(144,234,41)"/><polygon points="273.2,333.0 274.1,332.9 271.1,341.4 270.3,341.6" fill="rgb(145,234,41)"/><polygon points="268.2,342.3 268.9,342.0 266.9,350.8 266.3,351.1" fill="rgb(122,230,45)"/><polygon points="268.9,342.0 269.6,341.8 267.5,350.6 266.9,350.8" fill="rgb(123,230,45)"/><polygon points="269.6,341.8 270.3,341.6 268.2,350.3 267.5,350.6" fill="rgb(123,231,44)"/><polygon points="270.3,341.6 271.1,341.4 268.8,350.1 268.2,350.3" fill="rgb(124,231,44)"/><polygon points="266.3,351.1 266.9,350.8 265.4,359.8 264.8,360.0" fill="rgb(101,227,48)"/><polygon points="266.9,350.8 267.5,350.6 266.1,359.5 265.4,359.8" fill="rgb(102,227,48)"/><polygon points="267.5,350.6 268.2,350.3 266.7,359.2 266.1,359.5" fill="rgb(102,227,48)"/><polygon points="268.2,350.3 268.8,350.1 267.3,359.0 266.7,359.2" fill="rgb(103,227,48)"/></g><g stroke="#10301c" stroke-width="0.45" stroke-linejoin="round"><polygon points="214.4,390.7 220.4,391.0 227.4,385.6 222.2,385.1" fill="rgb(20,109,150)"/><polygon points="220.4,391.0 226.3,391.4 232.6,386.2 227.4,385.6" fill="rgb(19,106,150)"/><polygon points="226.3,391.4 232.3,391.7 237.8,386.7 232.6,386.2" fill="rgb(19,103,150)"/><polygon points="232.3,391.7 238.2,392.1 243.0,387.3 237.8,386.7" fill="rgb(19,100,150)"/><polygon points="238.2,392.1 244.2,392.4 248.2,387.8 243.0,387.3" fill="rgb(18,97,150)"/><polygon points="222.2,385.1 227.4,385.6 232.2,378.6 227.2,377.2" fill="rgb(26,152,124)"/><polygon points="227.4,385.6 232.6,386.2 237.1,379.9 232.2,378.6" fill="rgb(25,146,127)"/><polygon points="232.6,386.2 237.8,386.7 242.1,381.3 237.1,379.9" fill="rgb(24,140,131)"/><polygon points="237.8,386.7 243.0,387.3 247.0,382.6 242.1,381.3" fill="rgb(24,133,135)"/><polygon points="243.0,387.3 248.2,387.8 252.0,384.0 247.0,382.6" fill="rgb(23,127,139)"/><polygon points="227.2,377.2 232.2,378.6 235.6,370.6 230.5,368.2" fill="rgb(34,186,97)"/><polygon points="232.2,378.6 237.1,379.9 240.6,373.0 235.6,370.6" fill="rgb(32,178,103)"/><polygon points="237.1,379.9 242.1,381.3 245.7,375.4 240.6,373.0" fill="rgb(31,170,109)"/><polygon points="242.1,381.3 247.0,382.6 250.8,377.8 245.7,375.4" fill="rgb(29,162,116)"/><polygon points="247.0,382.6 252.0,384.0 255.8,380.2 250.8,377.8" fill="rgb(27,154,122)"/><polygon points="230.5,368.2 235.6,370.6 238.8,362.3 233.7,359.1" fill="rgb(40,205,85)"/><polygon points="235.6,370.6 240.6,373.0 244.0,365.6 238.8,362.3" fill="rgb(38,199,89)"/><polygon points="240.6,373.0 245.7,375.4 249.1,368.8 244.0,365.6" fill="rgb(36,192,93)"/><polygon points="245.7,375.4 250.8,377.8 254.3,372.1 249.1,368.8" fill="rgb(34,186,97)"/><polygon points="250.8,377.8 255.8,380.2 259.4,375.3 254.3,372.1" fill="rgb(32,175,106)"/><polygon points="233.7,359.1 238.8,362.3 242.2,354.0 237.1,350.1" fill="rgb(45,219,76)"/><polygon points="238.8,362.3 244.0,365.6 247.3,357.9 242.2,354.0" fill="rgb(43,214,79)"/><polygon points="244.0,365.6 249.1,368.8 252.4,361.8 247.3,357.9" fill="rgb(41,209,82)"/><polygon points="249.1,368.8 254.3,372.1 257.5,365.7 252.4,361.8" fill="rgb(39,201,88)"/><polygon points="254.3,372.1 259.4,375.3 262.7,369.6 257.5,365.7" fill="rgb(36,192,93)"/><polygon points="237.1,350.1 242.2,354.0 245.4,345.2 240.7,341.1" fill="rgb(49,229,70)"/><polygon points="242.2,354.0 247.3,357.9 250.2,349.3 245.4,345.2" fill="rgb(47,224,73)"/><polygon points="247.3,357.9 252.4,361.8 254.9,353.5 250.2,349.3" fill="rgb(45,220,75)"/><polygon points="252.4,361.8 257.5,365.7 259.7,357.6 254.9,353.5" fill="rgb(43,215,78)"/><polygon points="257.5,365.7 262.7,369.6 264.4,361.7 259.7,357.6" fill="rgb(41,208,82)"/><polygon points="240.7,341.1 245.4,345.2 248.5,336.2 244.2,332.1" fill="rgb(58,235,65)"/><polygon points="245.4,345.2 250.2,349.3 252.9,340.3 248.5,336.2" fill="rgb(53,233,67)"/><polygon points="250.2,349.3 254.9,353.5 257.3,344.3 252.9,340.3" fill="rgb(49,230,69)"/><polygon points="254.9,353.5 259.7,357.6 261.7,348.4 257.3,344.3" fill="rgb(47,225,72)"/><polygon points="259.7,357.6 264.4,361.7 266.1,352.5 261.7,348.4" fill="rgb(45,220,75)"/><polygon points="244.2,332.1 248.5,336.2 252.0,327.1 248.0,323.3" fill="rgb(69,238,62)"/><polygon points="248.5,336.2 252.9,340.3 256.1,330.8 252.0,327.1" fill="rgb(64,237,63)"/><polygon points="252.9,340.3 257.3,344.3 260.1,334.6 256.1,330.8" fill="rgb(59,235,65)"/><polygon points="257.3,344.3 261.7,348.4 264.2,338.4 260.1,334.6" fill="rgb(54,233,67)"/><polygon points="261.7,348.4 266.1,352.5 268.2,342.1 264.2,338.4" fill="rgb(50,232,68)"/><polygon points="248.0,323.3 252.0,327.1 255.8,317.8 252.0,314.5" fill="rgb(88,241,59)"/><polygon points="252.0,327.1 256.1,330.8 259.6,321.1 255.8,317.8" fill="rgb(77,240,60)"/><polygon points="256.1,330.8 260.1,334.6 263.4,324.4 259.6,321.1" fill="rgb(72,239,61)"/><polygon points="260.1,334.6 264.2,338.4 267.2,327.7 263.4,324.4" fill="rgb(67,237,63)"/><polygon points="264.2,338.4 268.2,342.1 271.1,331.0 267.2,327.7" fill="rgb(63,236,64)"/><polygon points="252.0,314.5 255.8,317.8 260.4,308.7 256.6,306.1" fill="rgb(115,243,56)"/><polygon points="255.8,317.8 259.6,321.1 264.2,311.3 260.4,308.7" fill="rgb(106,242,57)"/><polygon points="259.6,321.1 263.4,324.4 268.0,314.0 264.2,311.3" fill="rgb(97,241,58)"/><polygon points="263.4,324.4 267.2,327.7 271.8,316.6 268.0,314.0" fill="rgb(88,241,59)"/><polygon points="267.2,327.7 271.1,331.0 275.6,319.2 271.8,316.6" fill="rgb(79,240,60)"/><polygon points="256.6,306.1 260.4,308.7 265.9,300.0 262.1,298.2" fill="rgb(151,244,51)"/><polygon points="260.4,308.7 264.2,311.3 269.7,301.8 265.9,300.0" fill="rgb(141,244,52)"/><polygon points="264.2,311.3 268.0,314.0 273.5,303.6 269.7,301.8" fill="rgb(131,243,54)"/><polygon points="268.0,314.0 271.8,316.6 277.4,305.4 273.5,303.6" fill="rgb(121,243,55)"/><polygon points="271.8,316.6 275.6,319.2 281.2,307.2 277.4,305.4" fill="rgb(114,243,56)"/><polygon points="262.1,298.2 265.9,300.0 273.0,293.1 269.3,292.3" fill="rgb(183,245,47)"/><polygon points="265.9,300.0 269.7,301.8 276.7,293.8 273.0,293.1" fill="rgb(178,245,48)"/><polygon points="269.7,301.8 273.5,303.6 280.5,294.6 276.7,293.8" fill="rgb(173,245,48)"/><polygon points="273.5,303.6 277.4,305.4 284.2,295.4 280.5,294.6" fill="rgb(167,245,49)"/><polygon points="277.4,305.4 281.2,307.2 287.9,296.2 284.2,295.4" fill="rgb(161,244,50)"/><polygon points="269.3,292.3 273.0,293.1 282.1,288.9 278.5,289.5" fill="rgb(203,244,46)"/><polygon points="273.0,293.1 276.7,293.8 285.6,288.4 282.1,288.9" fill="rgb(203,244,46)"/><polygon points="276.7,293.8 280.5,294.6 289.2,287.8 285.6,288.4" fill="rgb(202,244,46)"/><polygon points="280.5,294.6 284.2,295.4 292.7,287.3 289.2,287.8" fill="rgb(202,244,46)"/><polygon points="284.2,295.4 287.9,296.2 296.3,286.7 292.7,287.3" fill="rgb(201,244,46)"/></g><line x1="214.0" y1="266.0" x2="297.5" y2="279.0" stroke="#a8a8a8" stroke-width="0.5"/><line x1="297.5" y1="279.0" x2="358.2" y2="234.0" stroke="#a8a8a8" stroke-width="0.5"/><line x1="297.5" y1="279.0" x2="297.5" y2="420.0" stroke="#a8a8a8" stroke-width="0.5"/><line x1="214.0" y1="266.0" x2="274.7" y2="221.4" stroke="#a8a8a8" stroke-width="0.5"/><line x1="274.7" y1="221.4" x2="358.2" y2="234.0" stroke="#a8a8a8" stroke-width="0.5"/><line x1="214.0" y1="266.0" x2="214.0" y2="407.0" stroke="#a8a8a8" stroke-width="0.5"/><line x1="214.0" y1="407.0" x2="297.5" y2="420.0" stroke="#a8a8a8" stroke-width="0.5"/><line x1="297.5" y1="420.0" x2="358.2" y2="375.0" stroke="#a8a8a8" stroke-width="0.5"/><line x1="358.2" y1="234.0" x2="358.2" y2="375.0" stroke="#a8a8a8" stroke-width="0.5"/><defs><radialGradient id="gg" cx="40%" cy="35%" r="65%"><stop offset="0" stop-color="#8af08a"/><stop offset="0.55" stop-color="#2fc02f"/><stop offset="1" stop-color="#128a12"/></radialGradient><filter id="bl" x="-20%" y="-20%" width="140%" height="140%"><feGaussianBlur stdDeviation="0.35"/></filter></defs><g filter="url(#bl)"><rect x="4.20" y="33.40" width="6.10" height="6.60" rx="0.6" fill="#4a4036"/><rect x="4.50" y="33.50" width="5.50" height="3.30" rx="0.4" fill="#f3d688"/><rect x="5.30" y="37.60" width="3.80" height="2.00" rx="0.4" fill="#2c2620"/><path d="M16.4 39.8 L16.8 33.4 L18.6 34.6 L19.8 37.6 L19 39.9 z" fill="#f4c62a"/><path d="M17 39.6 L17.2 34.6 L18.2 36 z" fill="#fbe890"/><path d="M18.50 35.63 L20.57 35.63 L21.03 35.17 L23.45 38.28 L20.34 40.23 L18.73 38.16 Z" fill="url(#gg)" stroke="#1a8a1a" stroke-width="0.3" stroke-linejoin="round"/><path d="M27.85 35.38 L29.88 35.38 L30.33 34.92 L32.69 37.96 L29.65 39.88 L28.08 37.85 Z" fill="url(#gg)" stroke="#1a8a1a" stroke-width="0.3" stroke-linejoin="round"/><path d="M36.95 35.38 L38.98 35.38 L39.43 34.92 L41.79 37.96 L38.75 39.88 L37.18 37.85 Z" fill="url(#gg)" stroke="#1a8a1a" stroke-width="0.3" stroke-linejoin="round"/><path d="M46.85 35.38 L48.88 35.38 L49.33 34.92 L51.69 37.96 L48.65 39.88 L47.08 37.85 Z" fill="url(#gg)" stroke="#1a8a1a" stroke-width="0.3" stroke-linejoin="round"/><rect x="57.20" y="33.80" width="5.80" height="5.80" rx="0.4" fill="#f6f7f3" stroke="#c9ccc2" stroke-width="0.3"/><rect x="57.50" y="33.50" width="1.20" height="1.90" rx="0.2" fill="#3c3c3a"/><rect x="59.20" y="33.50" width="1.20" height="1.90" rx="0.2" fill="#4a4a46"/><rect x="60.90" y="33.50" width="1.50" height="1.90" rx="0.2" fill="#3c3c3a"/><path d="M59.30 36.10 L61.10 36.10 L61.50 35.70 L63.60 38.40 L60.90 40.10 L59.50 38.30 Z" fill="url(#gg)" stroke="#1a8a1a" stroke-width="0.3" stroke-linejoin="round"/><rect x="67.00" y="33.80" width="5.80" height="5.80" rx="0.4" fill="#f6f7f3" stroke="#c9ccc2" stroke-width="0.3"/><rect x="67.30" y="33.50" width="1.20" height="1.90" rx="0.2" fill="#3c3c3a"/><rect x="69.00" y="33.50" width="1.20" height="1.90" rx="0.2" fill="#4a4a46"/><rect x="70.70" y="33.50" width="1.50" height="1.90" rx="0.2" fill="#3c3c3a"/><path d="M69.10 36.10 L70.90 36.10 L71.30 35.70 L73.40 38.40 L70.70 40.10 L69.30 38.30 Z" fill="url(#gg)" stroke="#1a8a1a" stroke-width="0.3" stroke-linejoin="round"/><rect x="76.40" y="33.80" width="5.80" height="5.80" rx="0.4" fill="#f6f7f3" stroke="#c9ccc2" stroke-width="0.3"/><rect x="76.70" y="33.50" width="1.20" height="1.90" rx="0.2" fill="#3c3c3a"/><rect x="78.40" y="33.50" width="1.20" height="1.90" rx="0.2" fill="#4a4a46"/><rect x="80.10" y="33.50" width="1.50" height="1.90" rx="0.2" fill="#3c3c3a"/><path d="M78.50 36.10 L80.30 36.10 L80.70 35.70 L82.80 38.40 L80.10 40.10 L78.70 38.30 Z" fill="url(#gg)" stroke="#1a8a1a" stroke-width="0.3" stroke-linejoin="round"/><rect x="98.40" y="33.80" width="5.80" height="5.80" rx="0.4" fill="#f6f7f3" stroke="#c9ccc2" stroke-width="0.3"/><rect x="98.70" y="33.50" width="1.20" height="1.90" rx="0.2" fill="#3c3c3a"/><rect x="100.40" y="33.50" width="1.20" height="1.90" rx="0.2" fill="#4a4a46"/><rect x="102.10" y="33.50" width="1.50" height="1.90" rx="0.2" fill="#3c3c3a"/><path d="M100.50 36.10 L102.30 36.10 L102.70 35.70 L104.80 38.40 L102.10 40.10 L100.70 38.30 Z" fill="url(#gg)" stroke="#1a8a1a" stroke-width="0.3" stroke-linejoin="round"/><rect x="108.00" y="33.80" width="5.80" height="5.80" rx="0.4" fill="#f6f7f3" stroke="#c9ccc2" stroke-width="0.3"/><rect x="108.30" y="33.50" width="1.20" height="1.90" rx="0.2" fill="#3c3c3a"/><rect x="110.00" y="33.50" width="1.20" height="1.90" rx="0.2" fill="#4a4a46"/><rect x="111.70" y="33.50" width="1.50" height="1.90" rx="0.2" fill="#3c3c3a"/><path d="M110.10 36.10 L111.90 36.10 L112.30 35.70 L114.40 38.40 L111.70 40.10 L110.30 38.30 Z" fill="url(#gg)" stroke="#1a8a1a" stroke-width="0.3" stroke-linejoin="round"/><rect x="117.60" y="33.80" width="5.80" height="5.80" rx="0.4" fill="#f6f7f3" stroke="#c9ccc2" stroke-width="0.3"/><rect x="117.90" y="33.50" width="1.20" height="1.90" rx="0.2" fill="#3c3c3a"/><rect x="119.60" y="33.50" width="1.20" height="1.90" rx="0.2" fill="#4a4a46"/><rect x="121.30" y="33.50" width="1.50" height="1.90" rx="0.2" fill="#3c3c3a"/><path d="M119.70 36.10 L121.50 36.10 L121.90 35.70 L124.00 38.40 L121.30 40.10 L119.90 38.30 Z" fill="url(#gg)" stroke="#1a8a1a" stroke-width="0.3" stroke-linejoin="round"/><path d="M86.60 35.46 L88.94 35.46 L89.46 34.94 L92.19 38.45 L88.68 40.66 L86.86 38.32 Z" fill="url(#gg)" stroke="#1a8a1a" stroke-width="0.3" stroke-linejoin="round"/><rect x="87.60" y="33.40" width="1.60" height="1.80" rx="0.4" fill="#55604a"/><rect x="130.30" y="33.40" width="3.20" height="4.40" rx="0.4" fill="#e4e2da" stroke="#3c3c3c" stroke-width="0.6"/><rect x="133.00" y="35.40" width="3.30" height="4.40" rx="0.4" fill="#f0eee6" stroke="#3c3c3c" stroke-width="0.6"/><rect x="140.60" y="33.80" width="5.60" height="6.00" rx="0.4" fill="#bdb9aa"/><path d="M142 33.8 L143.4 36.8 L144.8 33.8 z" fill="#e6e3d6"/><rect x="152.40" y="33.80" width="6.60" height="5.80" rx="0.4" fill="#dff0fb" stroke="#58a6e6" stroke-width="0.7"/><rect x="152.40" y="33.80" width="6.60" height="1.60" rx="0.4" fill="#58a6e6"/><rect x="153.60" y="36.60" width="4.20" height="1.80" rx="0.4" fill="#fff"/><rect x="162.40" y="33.80" width="6.40" height="5.60" rx="0.4" fill="#d8ecf8" stroke="#58a6e6" stroke-width="0.6"/><rect x="162.40" y="33.80" width="6.40" height="1.40" rx="0.4" fill="#58a6e6"/><path d="M164.00 35.42 L165.98 35.42 L166.42 34.98 L168.73 37.95 L165.76 39.82 L164.22 37.84 Z" fill="url(#gg)" stroke="#1a8a1a" stroke-width="0.3" stroke-linejoin="round"/><rect x="171.80" y="33.80" width="6.40" height="5.60" rx="0.4" fill="#d8ecf8" stroke="#58a6e6" stroke-width="0.6"/><rect x="171.80" y="33.80" width="6.40" height="1.40" rx="0.4" fill="#58a6e6"/><path d="M173.40 35.42 L175.38 35.42 L175.82 34.98 L178.13 37.95 L175.16 39.82 L173.62 37.84 Z" fill="url(#gg)" stroke="#1a8a1a" stroke-width="0.3" stroke-linejoin="round"/><path d="M184.8 40 L190.9 40 L190.9 33.8 z" fill="#ee962c"/><path d="M184.8 40 L190.9 33.8" stroke="#f9d9a0" stroke-width="0.7"/><rect x="193.80" y="34.20" width="2.60" height="5.60" rx="1" fill="#3a3a3a"/><rect x="197.60" y="34.20" width="2.60" height="5.60" rx="1" fill="#3a3a3a"/><rect x="195.60" y="35.60" width="2.60" height="1.80" rx="0.4" fill="#50504c"/><rect x="194.50" y="36.40" width="1.10" height="2.00" rx="0.5" fill="#d8d8d8"/><rect x="198.40" y="36.40" width="1.10" height="2.00" rx="0.5" fill="#d8d8d8"/><circle cx="210" cy="36.6" r="3.3" fill="#2a58d0" stroke="#a9bff0" stroke-width="0.5"/><circle cx="209.4" cy="35.6" r="1.8" fill="#5f8cf0" opacity="0.7"/><rect x="209.5" y="35.8" width="1.1" height="2.8" fill="#fff"/><rect x="209.5" y="34.2" width="1.1" height="1" fill="#fff"/></g>
</svg>
<!-- taskbar -->
<div class="a" style="left:0;top:481.8px;width:790px;height:12.2px;background:linear-gradient(#3a80f0 0%,#2864dc 14%,#2259d2 50%,#2058d0 85%,#1a48b4 100%)"></div>
<div class="a" style="left:0;top:481.8px;width:35px;height:12.2px;background:linear-gradient(#5aab5a 0%,#3c963c 20%,#328a34 60%,#2d7c2e 100%);border-radius:0 5px 5px 0"></div>
<div class="a" style="left:4px;top:485.2px;width:4.5px;height:5px;border-radius:1px;background:linear-gradient(135deg,#e8643c 0 35%,#7cc050 35% 55%,#4e8ae8 55% 78%,#f0cc3c 78%)"></div>
<div class="a" style="left:38px;top:483.2px;width:67px;height:10px;background:linear-gradient(#5c9cf8 0%,#3f84f0 16%,#3a7cec 60%,#3676e6 100%);border-radius:1.4px"></div><div class="a" style="left:43.8px;top:485px;width:4.4px;height:6px;background:linear-gradient(90deg,#f8e890,#e8c040);border:0.4px solid #a08420;border-radius:0.5px"></div><div class="a" style="left:107px;top:483.2px;width:63.6px;height:10px;background:linear-gradient(#5c9cf8 0%,#3f84f0 16%,#3a7cec 60%,#3676e6 100%);border-radius:1.4px"></div><div class="a" style="left:110.2px;top:485px;width:4.4px;height:6px;background:linear-gradient(90deg,#f8e890,#e8c040);border:0.4px solid #a08420;border-radius:0.5px"></div><div class="a" style="left:172px;top:483.2px;width:65px;height:10px;background:linear-gradient(#5c9cf8 0%,#3f84f0 16%,#3a7cec 60%,#3676e6 100%);border-radius:1.4px"></div><div class="a" style="left:174.4px;top:485.4px;width:5.2px;height:5.2px;background:conic-gradient(#e04a32 0 33%,#f2c832 33% 66%,#46a84a 66%);border-radius:2.6px"></div><div class="a" style="left:238px;top:483.2px;width:64px;height:10px;background:linear-gradient(#1c47a8,#2252b8 30%,#2458c4);border-radius:1.2px;box-shadow:inset 0.5px 0.5px 0.6px #12307c"></div><div class="a" style="left:242.2px;top:486.1px;width:3.6px;height:3.6px;background:#39415c;border-radius:0.8px;transform:rotate(45deg)"></div><div class="a" style="left:303.8px;top:483.2px;width:64.2px;height:10px;background:linear-gradient(#5c9cf8 0%,#3f84f0 16%,#3a7cec 60%,#3676e6 100%);border-radius:1.4px"></div><div class="a" style="left:306.7px;top:485.2px;width:4.6px;height:5.6px;background:#eef2fa;border:0.5px solid #4a5a8a"></div>
<div class="a" style="left:759.4px;top:482px;width:30.6px;height:12px;background:linear-gradient(#3aacf6 0%,#1f97ee 18%,#1c90ea 60%,#1a82da 100%);border-left:0.7px solid #1a5cc4;border-radius:2px 0 0 0"></div>
<div class="a" style="left:744.6px;top:486.2px;width:7.1px;height:3.9px;background:#d6dbe6;border:0.7px solid #2b3350;border-radius:0.8px"></div>
<div class="a" style="left:755.9px;top:484.9px;width:5.4px;height:5.6px;border-radius:2.8px;background:#e4f0fc;border:0.7px solid #49b0f2"></div><div class="a" style="left:758px;top:486px;width:1.6px;height:3px;background:#5a9ee0;border-radius:0.8px"></div>
<svg class="a" style="left:763.5px;top:484.8px" width="8" height="7"><path d="M0.3 5.6 L6.5 5.6 L6.5 0.9 Z" fill="#b9c46a"/><path d="M0.3 5.6 L6.5 0.9" stroke="#eef0dc" stroke-width="0.6"/><path d="M6.5 0.9 V5.6" stroke="#e8e8d8" stroke-width="0.5"/></svg>
<svg class="a" style="left:0;top:0;font-family:'Liberation Sans',sans-serif" width="790" height="494" viewBox="0 0 790 494">
<defs><clipPath id="tc"><rect x="4" y="51" width="78.6" height="410"/></clipPath></defs><text x="365.80" y="214.74" font-size="5.4" fill="#ece548" textLength="41.00" lengthAdjust="spacingAndGlyphs">УОЗ (град. ПКВ)</text><text x="366.50" y="232.84" font-size="5.4" fill="#f0f0f0" textLength="14.20" lengthAdjust="spacingAndGlyphs">60,00</text><text x="366.50" y="240.67" font-size="5.4" fill="#f0f0f0" textLength="14.20" lengthAdjust="spacingAndGlyphs">55,56</text><text x="366.50" y="248.49" font-size="5.4" fill="#f0f0f0" textLength="14.20" lengthAdjust="spacingAndGlyphs">51,11</text><text x="366.50" y="256.31" font-size="5.4" fill="#f0f0f0" textLength="14.20" lengthAdjust="spacingAndGlyphs">46,67</text><text x="366.50" y="264.13" font-size="5.4" fill="#f0f0f0" textLength="14.20" lengthAdjust="spacingAndGlyphs">42,22</text><text x="366.50" y="271.96" font-size="5.4" fill="#f0f0f0" textLength="14.20" lengthAdjust="spacingAndGlyphs">37,78</text><text x="366.50" y="279.78" font-size="5.4" fill="#f0f0f0" textLength="14.20" lengthAdjust="spacingAndGlyphs">33,33</text><text x="366.50" y="287.60" font-size="5.4" fill="#f0f0f0" textLength="14.20" lengthAdjust="spacingAndGlyphs">28,89</text><text x="366.50" y="295.42" font-size="5.4" fill="#f0f0f0" textLength="14.20" lengthAdjust="spacingAndGlyphs">24,44</text><text x="366.50" y="303.24" font-size="5.4" fill="#f0f0f0" textLength="14.20" lengthAdjust="spacingAndGlyphs">20,00</text><text x="366.50" y="311.07" font-size="5.4" fill="#f0f0f0" textLength="14.20" lengthAdjust="spacingAndGlyphs">15,56</text><text x="366.50" y="318.89" font-size="5.4" fill="#f0f0f0" textLength="14.20" lengthAdjust="spacingAndGlyphs">11,11</text><text x="366.50" y="326.71" font-size="5.4" fill="#f0f0f0" textLength="11.50" lengthAdjust="spacingAndGlyphs">6,67</text><text x="366.50" y="334.53" font-size="5.4" fill="#f0f0f0" textLength="11.50" lengthAdjust="spacingAndGlyphs">2,22</text><text x="366.50" y="342.36" font-size="5.4" fill="#f0f0f0" textLength="14.20" lengthAdjust="spacingAndGlyphs">-2,22</text><text x="366.50" y="350.18" font-size="5.4" fill="#f0f0f0" textLength="14.20" lengthAdjust="spacingAndGlyphs">-6,67</text><text x="366.50" y="358.00" font-size="5.4" fill="#f0f0f0" textLength="16.50" lengthAdjust="spacingAndGlyphs">-11,11</text><text x="366.50" y="365.82" font-size="5.4" fill="#f0f0f0" textLength="16.50" lengthAdjust="spacingAndGlyphs">-15,56</text><text x="366.50" y="373.64" font-size="5.4" fill="#f0f0f0" textLength="16.50" lengthAdjust="spacingAndGlyphs">-20,00</text><text x="357.00" y="388.94" font-size="5.4" fill="#f0f0f0" textLength="10.60" lengthAdjust="spacingAndGlyphs">5100</text><text x="343.80" y="399.64" font-size="5.4" fill="#f0f0f0" textLength="10.60" lengthAdjust="spacingAndGlyphs">3900</text><text x="330.40" y="409.74" font-size="5.4" fill="#f0f0f0" textLength="10.90" lengthAdjust="spacingAndGlyphs">2700</text><text x="317.00" y="419.44" font-size="5.4" fill="#f0f0f0" textLength="10.30" lengthAdjust="spacingAndGlyphs">1250</text><text x="302.50" y="429.54" font-size="5.4" fill="#f0f0f0" textLength="2.50" lengthAdjust="spacingAndGlyphs">0</text><text x="215.70" y="419.44" font-size="5.4" fill="#f0f0f0" textLength="5.80" lengthAdjust="spacingAndGlyphs">95</text><text x="230.90" y="421.44" font-size="5.4" fill="#f0f0f0" textLength="5.80" lengthAdjust="spacingAndGlyphs">80</text><text x="245.60" y="423.94" font-size="5.4" fill="#f0f0f0" textLength="5.80" lengthAdjust="spacingAndGlyphs">60</text><text x="260.80" y="425.74" font-size="5.4" fill="#f0f0f0" textLength="5.80" lengthAdjust="spacingAndGlyphs">40</text><text x="276.00" y="428.24" font-size="5.4" fill="#f0f0f0" textLength="5.80" lengthAdjust="spacingAndGlyphs">20</text><text x="293.20" y="430.34" font-size="5.4" fill="#f0f0f0" textLength="2.50" lengthAdjust="spacingAndGlyphs">0</text><text x="232.90" y="434.61" font-size="5.3" fill="#ece548" textLength="32.40" lengthAdjust="spacingAndGlyphs">Нагрузка (%)</text><text x="349.40" y="417.31" font-size="5.3" fill="#ece548" textLength="43.00" lengthAdjust="spacingAndGlyphs">Обороты (об/мин)</text><text x="9.00" y="8.12" font-size="7" fill="#d6e1fc" textLength="51.00" lengthAdjust="spacingAndGlyphs" font-weight="bold">ChipExplorer 2.1.21</text><text x="2.20" y="16.69" font-size="5.1" fill="#aaa798" textLength="15.00" lengthAdjust="spacingAndGlyphs">Проект</text><text x="22.30" y="16.69" font-size="5.1" fill="#aaa798" textLength="20.70" lengthAdjust="spacingAndGlyphs">Операции</text><text x="48.00" y="16.49" font-size="5.1" fill="#aaa798" textLength="10.70" lengthAdjust="spacingAndGlyphs">Окно</text><text x="63.30" y="16.49" font-size="5.1" fill="#aaa798" textLength="16.40" lengthAdjust="spacingAndGlyphs">Помощь</text><text x="11.40" y="28.67" font-size="6.3" fill="#d3dffb" textLength="362.00" lengthAdjust="spacingAndGlyphs" font-weight="bold">*Mitsubishi_Pajero_8304_31A976_3.0 - C:\Program Files\ChipExplorer\projects\Mitsubishi\Pajero\Mitsubishi_Pajero_8304_31A976_3.0.chx</text><text x="5.60" y="47.29" font-size="5.1" fill="#000" textLength="41.20" lengthAdjust="spacingAndGlyphs">Дерево калибровок</text><text x="52.40" y="47.89" font-size="5.1" fill="#000" textLength="22.60" lengthAdjust="spacingAndGlyphs">Диаграмма</text><text x="88.40" y="57.49" font-size="5.1" fill="#000" textLength="44.80" lengthAdjust="spacingAndGlyphs">Название параметра</text><text x="212.20" y="57.49" font-size="5.1" fill="#000" textLength="20.80" lengthAdjust="spacingAndGlyphs">Значение</text><text x="289.60" y="57.49" font-size="5.1" fill="#000" textLength="43.00" lengthAdjust="spacingAndGlyphs">Единицы измерения</text><text x="671.30" y="57.49" font-size="5.1" fill="#000" textLength="26.60" lengthAdjust="spacingAndGlyphs">Зависимость</text><text x="95.20" y="65.19" font-size="5.1" fill="#000" textLength="12.10" lengthAdjust="spacingAndGlyphs">УОЗ 1</text><text x="212.20" y="65.19" font-size="5.1" fill="#000" textLength="22.80" lengthAdjust="spacingAndGlyphs">3D график</text><text x="289.60" y="65.19" font-size="5.1" fill="#000" textLength="21.40" lengthAdjust="spacingAndGlyphs">град. ПКВ</text><text x="670.00" y="65.19" font-size="5.1" fill="#000" textLength="47.80" lengthAdjust="spacingAndGlyphs">F (Обороты, Нагрузка)</text><text x="95.20" y="72.19" font-size="5.1" fill="#000" textLength="12.10" lengthAdjust="spacingAndGlyphs">УОЗ 2</text><text x="212.20" y="72.19" font-size="5.1" fill="#000" textLength="22.80" lengthAdjust="spacingAndGlyphs">3D график</text><text x="289.60" y="72.19" font-size="5.1" fill="#000" textLength="21.40" lengthAdjust="spacingAndGlyphs">град. ПКВ</text><text x="670.00" y="72.19" font-size="5.1" fill="#000" textLength="47.80" lengthAdjust="spacingAndGlyphs">F (Обороты, Нагрузка)</text><text x="95.20" y="79.19" font-size="5.1" fill="#000" textLength="12.10" lengthAdjust="spacingAndGlyphs">УОЗ 3</text><text x="212.20" y="79.19" font-size="5.1" fill="#000" textLength="22.80" lengthAdjust="spacingAndGlyphs">3D график</text><text x="289.60" y="79.19" font-size="5.1" fill="#000" textLength="21.40" lengthAdjust="spacingAndGlyphs">град. ПКВ</text><text x="670.00" y="79.19" font-size="5.1" fill="#000" textLength="47.80" lengthAdjust="spacingAndGlyphs">F (Обороты, Нагрузка)</text><text x="95.20" y="86.19" font-size="5.1" fill="#000" textLength="8.40" lengthAdjust="spacingAndGlyphs">УОЗ</text><text x="212.20" y="86.19" font-size="5.1" fill="#000" textLength="22.80" lengthAdjust="spacingAndGlyphs">3D график</text><text x="289.60" y="86.19" font-size="5.1" fill="#000" textLength="21.40" lengthAdjust="spacingAndGlyphs">град. ПКВ</text><text x="670.00" y="86.19" font-size="5.1" fill="#000" textLength="31.00" lengthAdjust="spacingAndGlyphs">F (ось X, ось Z)</text><text x="21.80" y="57.09" font-size="5.1" fill="#000" textLength="33.20" lengthAdjust="spacingAndGlyphs">Калибровки ПО</text><text x="30.20" y="63.67" font-size="5.1" fill="#000" textLength="33.80" lengthAdjust="spacingAndGlyphs">Идентификатор</text><text x="30.20" y="70.25" font-size="5.1" fill="#000" textLength="30.50" lengthAdjust="spacingAndGlyphs">Конфигурация</text><text x="37.80" y="76.83" font-size="5.1" fill="#000" textLength="14.00" lengthAdjust="spacingAndGlyphs">Евро 0</text><text x="37.80" y="83.41" font-size="5.1" fill="#000" textLength="14.00" lengthAdjust="spacingAndGlyphs">Евро 2</text><text x="30.20" y="89.99" font-size="5.1" fill="#000" textLength="9.40" lengthAdjust="spacingAndGlyphs">Пуск</text><text x="37.80" y="96.57" font-size="5.1" fill="#000" textLength="32.60" lengthAdjust="spacingAndGlyphs">Топливоподача</text><text x="30.20" y="103.15" font-size="5.1" fill="#000" textLength="28.10" lengthAdjust="spacingAndGlyphs">Холостой ход</text><text x="30.20" y="109.73" font-size="5.1" fill="#000" textLength="36.80" lengthAdjust="spacingAndGlyphs">Рабочие режимы</text><text x="37.80" y="116.31" font-size="5.1" fill="#000" textLength="9.20" lengthAdjust="spacingAndGlyphs">УОЗ</text><text x="45.60" y="122.89" font-size="5.1" fill="#000" textLength="55.00" lengthAdjust="spacingAndGlyphs" clip-path="url(#tc)">Динамическая коррекция</text><text x="45.60" y="129.47" font-size="5.1" fill="#000" textLength="55.00" lengthAdjust="spacingAndGlyphs" clip-path="url(#tc)">Динамическая коррекция</text><text x="37.80" y="136.05" font-size="5.1" fill="#000" textLength="16.80" lengthAdjust="spacingAndGlyphs">Топливо</text><text x="37.80" y="142.63" font-size="5.1" fill="#000" textLength="58.00" lengthAdjust="spacingAndGlyphs" clip-path="url(#tc)">Режим динамич. обеднения</text><text x="37.80" y="149.21" font-size="5.1" fill="#000" textLength="40.20" lengthAdjust="spacingAndGlyphs">Режим динам. обог.</text><text x="30.20" y="155.79" font-size="5.1" fill="#000" textLength="11.30" lengthAdjust="spacingAndGlyphs">e-Gas</text><text x="30.20" y="162.37" font-size="5.1" fill="#000" textLength="60.00" lengthAdjust="spacingAndGlyphs" clip-path="url(#tc)">Отключение топливоподачи</text><text x="30.20" y="168.95" font-size="5.1" fill="#000" textLength="48.10" lengthAdjust="spacingAndGlyphs">Лямбда-регулирование</text><text x="30.20" y="175.53" font-size="5.1" fill="#000" textLength="43.60" lengthAdjust="spacingAndGlyphs">Контроль детонации</text><text x="30.20" y="182.11" font-size="5.1" fill="#000" textLength="29.80" lengthAdjust="spacingAndGlyphs">Датчики и ИМ</text><text x="30.20" y="188.69" font-size="5.1" fill="#000" textLength="14.80" lengthAdjust="spacingAndGlyphs">Прочее</text><text x="26.20" y="35.97" font-size="3.8" fill="#777">1</text><text x="35.30" y="35.97" font-size="3.8" fill="#777">2</text><text x="45.20" y="35.97" font-size="3.8" fill="#777">3</text><text x="104.90" y="124.22" font-size="7" fill="#fff" textLength="13.40" lengthAdjust="spacingAndGlyphs" font-weight="bold">УОЗ 1</text><text x="98.00" y="132.89" font-size="5.1" fill="#000" textLength="28.40" lengthAdjust="spacingAndGlyphs">Отображение</text><text x="131.70" y="132.89" font-size="5.1" fill="#000" textLength="20.10" lengthAdjust="spacingAndGlyphs">Операции</text><text x="103.80" y="144.19" font-size="5.1" fill="#000" textLength="105.20" lengthAdjust="spacingAndGlyphs">Изменить значение графика (области) на значение</text><text x="281.30" y="144.29" font-size="5.1" fill="#b4b1a0" textLength="22.20" lengthAdjust="spacingAndGlyphs">Применить</text><text x="284.50" y="157.69" font-size="5.1" fill="#b4b1a0" textLength="20.80" lengthAdjust="spacingAndGlyphs">3D график</text><text x="295.30" y="171.29" font-size="5.1" fill="#000" textLength="5.00" lengthAdjust="spacingAndGlyphs">Ок</text><text x="323.50" y="171.29" font-size="5.1" fill="#000" textLength="15.20" lengthAdjust="spacingAndGlyphs">Отмена</text><text x="109.00" y="171.50" font-size="6.4" fill="#b0ad9c" textLength="25.00" lengthAdjust="spacingAndGlyphs" font-family="Liberation Serif">Адрес (hex)</text><text x="138.60" y="170.60" font-size="5" fill="#c8c5b6" textLength="8.90" lengthAdjust="spacingAndGlyphs">2 - %</text><text x="200.50" y="171.10" font-size="5" fill="#a8a594" textLength="5.50" lengthAdjust="spacingAndGlyphs">X=</text><text x="211.00" y="171.10" font-size="5" fill="#b8b5a6" textLength="4.80" lengthAdjust="spacingAndGlyphs">19</text><text x="234.80" y="171.10" font-size="5" fill="#a8a594" textLength="6.10" lengthAdjust="spacingAndGlyphs">Z=</text><text x="245.20" y="171.10" font-size="5" fill="#b8b5a6" textLength="4.80" lengthAdjust="spacingAndGlyphs">12</text><text x="99.20" y="183.29" font-size="5.1" fill="#000" textLength="19.10" lengthAdjust="spacingAndGlyphs">Изолинии</text><text x="122.60" y="182.69" font-size="5.1" fill="#000" textLength="28.20" lengthAdjust="spacingAndGlyphs">Поверхность</text><text x="155.60" y="183.29" font-size="5.1" fill="#000" textLength="18.20" lengthAdjust="spacingAndGlyphs">Матрица</text><text x="10.00" y="490.38" font-size="6.6" fill="#fff" textLength="15.30" lengthAdjust="spacingAndGlyphs" font-weight="bold" font-style="italic">пуск</text><text x="51.90" y="489.79" font-size="5.1" fill="#fff" textLength="45.60" lengthAdjust="spacingAndGlyphs">C:\Program Files\Chip...</text><text x="118.00" y="489.79" font-size="5.1" fill="#fff" textLength="46.50" lengthAdjust="spacingAndGlyphs">K:\ChipExplorer\proje...</text><text x="183.30" y="489.79" font-size="5.1" fill="#fff" textLength="45.60" lengthAdjust="spacingAndGlyphs">www.chipsoft.com.u...</text><text x="249.00" y="489.79" font-size="5.1" fill="#fff" textLength="39.60" lengthAdjust="spacingAndGlyphs">ChipExplorer 2.1.21</text><text x="315.00" y="489.79" font-size="5.1" fill="#fff" textLength="45.50" lengthAdjust="spacingAndGlyphs">подкапот.jpg (100...</text><text x="736.00" y="489.70" font-size="5" fill="#fff" textLength="5.90" lengthAdjust="spacingAndGlyphs">RU</text><text x="773.00" y="489.59" font-size="5.1" fill="#fff" textLength="11.00" lengthAdjust="spacingAndGlyphs">22:47</text>
</svg>
</div>
</body></html>
